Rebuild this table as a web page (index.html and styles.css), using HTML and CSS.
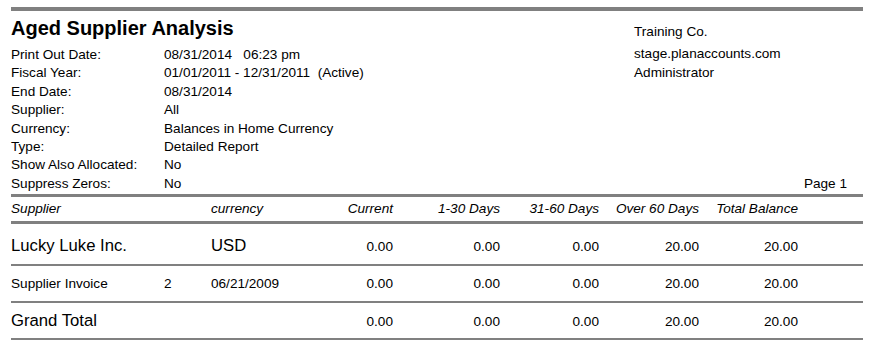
FILE: index.html
```html
<!DOCTYPE html>
<html>
<head>
<meta charset="utf-8">
<link rel="stylesheet" href="styles.css">
</head>
<body>
<div class="report">
  <div class="rule-top"></div>
  <div class="head">
    <div class="head-left">
      <h1 class="title">Aged Supplier Analysis</h1>
      <div class="meta">
        <div class="m-label">Print Out Date:</div><div class="m-value">08/31/2014&nbsp;&nbsp;&nbsp;06:23 pm</div>
        <div class="m-label">Fiscal Year:</div><div class="m-value">01/01/2011 - 12/31/2011&nbsp;&nbsp;(Active)</div>
        <div class="m-label">End Date:</div><div class="m-value">08/31/2014</div>
        <div class="m-label">Supplier:</div><div class="m-value">All</div>
        <div class="m-label">Currency:</div><div class="m-value">Balances in Home Currency</div>
        <div class="m-label">Type:</div><div class="m-value">Detailed Report</div>
        <div class="m-label">Show Also Allocated:</div><div class="m-value">No</div>
        <div class="m-label">Suppress Zeros:</div><div class="m-value">No</div>
      </div>
    </div>
    <div class="head-right">
      <div class="company">Training Co.</div>
      <div class="site">stage.planaccounts.com</div>
      <div class="user">Administrator</div>
      <div class="page">Page 1</div>
    </div>
  </div>
  <div class="row row-head">
    <div class="c-span">Supplier</div>
    <div>currency</div>
    <div class="num">Current</div>
    <div class="num">1-30 Days</div>
    <div class="num">31-60 Days</div>
    <div class="num">Over 60 Days</div>
    <div class="num">Total Balance</div>
    <div></div>
  </div>
  <div class="row row-supplier">
    <div class="c-span big">Lucky Luke Inc.</div>
    <div class="big">USD</div>
    <div class="num">0.00</div>
    <div class="num">0.00</div>
    <div class="num">0.00</div>
    <div class="num">20.00</div>
    <div class="num">20.00</div>
    <div></div>
  </div>
  <div class="row row-doc">
    <div>Supplier Invoice</div>
    <div>2</div>
    <div>06/21/2009</div>
    <div class="num">0.00</div>
    <div class="num">0.00</div>
    <div class="num">0.00</div>
    <div class="num">20.00</div>
    <div class="num">20.00</div>
    <div></div>
  </div>
  <div class="row row-total">
    <div class="c-span big">Grand Total</div>
    <div></div>
    <div class="num">0.00</div>
    <div class="num">0.00</div>
    <div class="num">0.00</div>
    <div class="num">20.00</div>
    <div class="num">20.00</div>
    <div></div>
  </div>
</div>
</body>
</html>
```

FILE: styles.css
```css
html, body {
  margin: 0;
  padding: 0;
  background: #ffffff;
}

body {
  font-family: "Liberation Sans", Arial, sans-serif;
  font-size: 13.6px;
  color: #000000;
}

.report {
  width: 852px;
  margin-left: 11px;
  padding-top: 7px;
}

.rule-top {
  height: 4px;
  background: #808080;
}

.head {
  display: flex;
}

.head-left {
  width: 623px;
}

.title {
  margin: 0;
  padding-top: 5px;
  font-size: 20px;
  line-height: 24px;
  font-weight: bold;
}

.meta {
  margin-top: 6px;
  display: grid;
  grid-template-columns: 153px 1fr;
  line-height: 18.4px;
  white-space: nowrap;
}

.head-right {
  width: 213px;
  display: flex;
  flex-direction: column;
  line-height: 18.4px;
  padding-top: 12px;
}

.site {
  margin-top: 4px;
}

.page {
  margin-top: auto;
  text-align: right;
}

.row {
  display: grid;
  grid-template-columns: 153px 47px 82px 100px 107px 99px 100px 99px 65px;
  align-items: baseline;
  white-space: nowrap;
  border-top: 2px solid #808080;
}

.c-span {
  grid-column: span 2;
}

.num {
  text-align: right;
}

.big {
  font-size: 16.7px;
}

.row-head {
  margin-top: 1px;
  border-top-width: 3px;
  font-style: italic;
  line-height: 24px;
}

.row-supplier {
  border-top-width: 3px;
  line-height: 20px;
  padding-top: 12px;
  padding-bottom: 7px;
}

.row-doc {
  line-height: 18px;
  padding-top: 9px;
  padding-bottom: 8px;
}

.row-total {
  line-height: 20px;
  padding-top: 8px;
  padding-bottom: 6px;
  border-bottom: 2px solid #808080;
}
```
